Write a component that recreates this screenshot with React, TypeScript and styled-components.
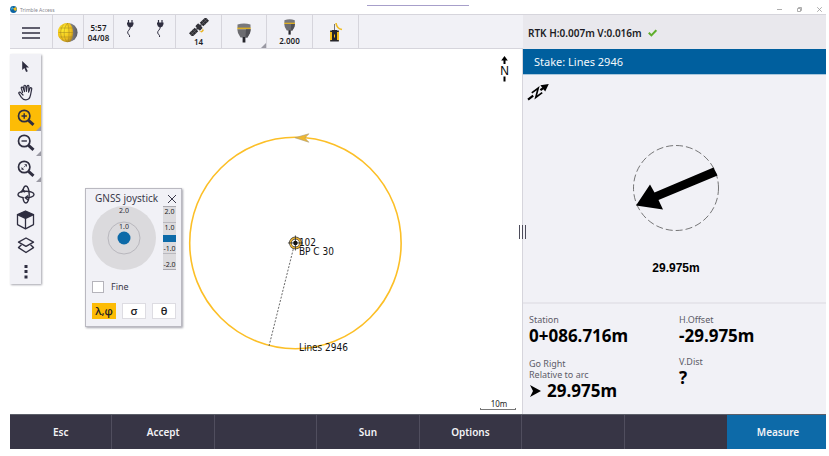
import React, { useState } from "react";
import styled, { createGlobalStyle, css } from "styled-components";

const ink = "#2f2e40";
const panel = "#f1f1f6";
const line = "#d6d5dc";
const amber = "#fdbc06";
const blue = "#0d6aa8";

const Global = createGlobalStyle`
  *, *::before, *::after { box-sizing: border-box; }
  html, body, #root { height: 100%; }
  body { margin: 0; background: #fff; color: #1c1c24; font-family: "Noto Sans", "Open Sans", sans-serif; }
  button { font: inherit; color: inherit; border: 0; padding: 0; margin: 0; background: none; cursor: pointer; }
  svg { display: block; }
`;

const Window = styled.div`
  display: flex;
  flex-direction: column;
  min-height: 100vh;
  padding: 5px 3px 7px 10px;
`;

const TitleBar = styled.header`
  display: grid;
  grid-template-columns: 1fr 102px 1fr;
  height: 9px;
`;
const TitleName = styled.div`
  display: flex;
  align-items: center;
  gap: 3px;
  font-size: 5px;
  line-height: 8px;
  color: #85858c;
`;
const TopAccent = styled.div`
  height: 1px;
  background: #a79fca;
`;
const WindowButtons = styled.div`
  display: flex;
  justify-content: flex-end;
  align-items: center;
  gap: 12px;
  padding-right: 3px;
`;
const WindowButton = styled.button`
  width: 8px;
  height: 8px;
  display: grid;
  place-items: center;
`;

const Main = styled.main`
  flex: 1;
  display: grid;
  grid-template-columns: minmax(0, 513fr) minmax(0, 303fr);
`;
const Left = styled.section`
  position: relative;
  display: flex;
  flex-direction: column;
`;

const cornerMark = css`
  &::after {
    content: "";
    position: absolute;
    right: 0;
    bottom: 0;
    border-style: solid;
    border-width: 0 0 5px 5px;
    border-color: transparent transparent #9a99a3 transparent;
  }
`;
const StatusBar = styled.div`
  display: flex;
  height: 35px;
  background: ${panel};
  border-top: 1px solid ${line};
  border-bottom: 1px solid ${line};
`;
const StatusCell = styled.button<{ $w: number; $corner?: boolean; $plain?: boolean; $raised?: boolean }>`
  position: relative;
  flex: none;
  width: ${(p) => p.$w}px;
  display: flex;
  flex-direction: column;
  align-items: center;
  justify-content: center;
  gap: ${(p) => (p.$corner === undefined ? 0 : 1)}px;
  padding: 2px 0 ${(p) => (p.$raised ? 6 : 0)}px;
  border-right: ${(p) => (p.$plain ? 0 : 1)}px solid ${line};
  font-size: 8px;
  line-height: 10px;
  font-weight: 600;
  ${(p) => p.$corner && cornerMark}
`;

const MapArea = styled.div`
  position: relative;
  flex: 1;
  display: flex;
  align-items: flex-start;
  padding-top: 5px;
  background: #fff;
  border-right: 1px solid ${line};
`;
const MapDrawing = styled.svg`
  position: absolute;
  inset: 0;
  width: 100%;
  height: 100%;
  font-family: "DejaVu Sans Condensed", "DejaVu Sans", sans-serif;
  font-size: 10px;
`;
const ToolStrip = styled.div`
  position: relative;
  display: grid;
  grid-auto-rows: 1fr;
  width: 31px;
  height: 230px;
  background: ${panel};
  box-shadow: 1px 1px 2px #a5a5ad;
`;
const Tool = styled.button<{ $active?: boolean; $corner?: boolean }>`
  position: relative;
  display: grid;
  place-items: center;
  background: ${(p) => (p.$active ? amber : "transparent")};
  ${(p) => p.$corner && cornerMark}
`;

const Joystick = styled.div`
  position: absolute;
  left: 75px;
  top: 139px;
  width: 97px;
  padding: 2px 4px 7px 6px;
  background: ${panel};
  border: 1px solid #bab9c1;
  box-shadow: 1px 1px 2px #a5a5ad;
`;
const JoystickHead = styled.div`
  display: flex;
  justify-content: space-between;
  align-items: center;
  padding-left: 3px;
  font-size: 10px;
  line-height: 15px;
  color: #3a394a;
`;
const JoystickPads = styled.div`
  display: flex;
  gap: 7px;
`;
const PadSvg = styled.svg`
  width: 64px;
  height: 64px;
  font-size: 7px;
`;
const RangeBox = styled.div`
  position: relative;
  width: 13px;
  height: 64px;
  background: #dcdbde;
  border-top: 1px solid #a9a8af;
  border-bottom: 1px solid #a9a8af;
`;
const RangeMarks = styled.div`
  display: grid;
  grid-template-rows: repeat(4, minmax(0, 1fr));
  height: 100%;
  font-size: 7px;
  line-height: 9px;
  text-align: center;
  & > span { border-bottom: 1px solid #b9b8be; }
  & > span:nth-child(2), & > span:last-child { border-bottom: 0; }
  & > span:nth-child(n + 3) { align-content: end; }
`;
const Range = styled.input`
  position: absolute;
  inset: 0;
  width: 13px;
  height: 62px;
  margin: 0;
  writing-mode: vertical-lr;
  direction: rtl;
  appearance: none;
  background: transparent;
  &::-webkit-slider-thumb {
    appearance: none;
    width: 13px;
    height: 7px;
    background: ${blue};
  }
`;
const FineLabel = styled.label`
  display: flex;
  align-items: center;
  gap: 7px;
  margin-top: 10px;
  font-size: 9px;
  line-height: 13px;
  color: #3a394a;
`;
const FineBox = styled.input`
  appearance: none;
  width: 12px;
  height: 12px;
  margin: 0;
  background: #fff;
  border: 1px solid #b5b4bb;
  &:checked { background: ${blue}; }
`;
const ModeRow = styled.div`
  display: flex;
  gap: 6px;
  margin-top: 10px;
`;
const ModeButton = styled.button<{ $active: boolean }>`
  width: 24px;
  height: 16px;
  font-family: "Open Sans", "Noto Sans", sans-serif;
  font-size: 11px;
  line-height: 14px;
  font-weight: 600;
  color: #1c1c24;
  background: ${(p) => (p.$active ? amber : "#fff")};
  border: 1px solid ${(p) => (p.$active ? amber : "#dddce2")};
`;

const North = styled.div`
  position: absolute;
  top: 7px;
  right: 11px;
`;
const Scale = styled.div`
  position: absolute;
  right: 6px;
  bottom: 4px;
  width: 36px;
  font-size: 8px;
  line-height: 9px;
  text-align: center;
  padding-left: 2px;
  color: #222;
  &::after {
    content: "";
    display: block;
    height: 2px;
    margin-left: -2px;
    border: 1px solid #777;
    border-top: 0;
  }
`;
const Splitter = styled.div`
  position: absolute;
  right: -3px;
  top: 211px;
  z-index: 1;
  width: 7px;
  height: 14px;
  display: flex;
  justify-content: space-between;
  & > i { width: 1px; background: #4c4b5a; }
`;

const Right = styled.aside`
  display: flex;
  flex-direction: column;
  background: ${panel};
`;
const RtkBar = styled.div`
  display: flex;
  align-items: center;
  gap: 6px;
  height: 35px;
  padding: 2px 5px 0;
  background: #e9e8ed;
  border-top: 1px solid ${line};
  font-size: 10px;
  font-weight: 600;
`;
const StakeTitle = styled.h1`
  margin: 0;
  height: 26px;
  padding-left: 11px;
  background: #005f9e;
  border-bottom: 1px solid #a9c7dc;
  color: #f4f9fc;
  font-size: 11px;
  line-height: 25px;
  font-weight: 400;
`;
const Compass = styled.div`
  position: relative;
  flex: 1;
  display: flex;
  flex-direction: column;
  align-items: center;
  gap: 28px;
  padding: 69px 0 0 3px;
  font-family: "Liberation Sans", Arial, sans-serif;
  font-size: 12px;
  line-height: 16px;
  font-weight: 700;
  color: #000;
`;
const Heading = styled.svg`
  position: absolute;
  left: 3px;
  top: 5px;
`;
const Readings = styled.dl`
  display: grid;
  grid-template-columns: 1fr 1fr;
  margin: 0;
  height: 112px;
  padding: 10px 6px 0;
  column-gap: 9px;
  border-top: 2px solid #e6e5eb;
`;
const ReadingColumn = styled.div<{ $gap: number }>`
  display: flex;
  flex-direction: column;
  gap: ${(p) => p.$gap}px;
`;
const Reading = styled.div`
  dt { font-size: 9px; line-height: 11px; color: #5d5c68; }
  dd {
    display: flex;
    align-items: center;
    gap: 6px;
    margin: 0;
    font-size: 17px;
    line-height: 21px;
    font-weight: 700;
    color: #000;
  }
`;

const Footer = styled.footer`
  display: grid;
  grid-template-columns: repeat(7, minmax(0, 1fr)) 99px;
  height: 35px;
  background: #373545;
  border-top: 1px solid #5c5f69;
`;
const SoftKey = styled.button<{ $primary?: boolean }>`
  border-right: 1px solid ${(p) => (p.$primary ? blue : "#504e5e")};
  background: ${(p) => (p.$primary ? blue : "transparent")};
  color: #f3f3f6;
  font-size: 10px;
  font-weight: 600;
  padding-left: ${(p) => (p.$primary ? 4 : 0)}px;
  &:nth-last-child(2) { border-right: 0; }
`;

const Plug = () => (
  <svg width="10" height="20" viewBox="0 0 10 20" fill="none">
    <path d="M3.5 0v3M7 0v3" stroke={ink} strokeWidth="1.2" />
    <path d="M2 2.5h6.5v1.5L7.5 6.5 5.2 7.5 3 6.5 2 4z" fill={ink} />
    <path d="M5.2 7c.2 3-3 3.500-2.500 6 .4 1.500 2.500 2 1.800 4" stroke={ink} strokeWidth="1" />
  </svg>
);

const Satellite = () => (
  <svg width="20" height="18" viewBox="0 0 20 18">
    <g transform="rotate(-44 10 9)">
      <rect x="-1.500" y="6.500" width="8" height="5" fill="#2b2b31" />
      <rect x="13.500" y="6.500" width="8" height="5" fill="#2b2b31" />
      <path d="M1 6.500v5M3.800 6.500v5M16.200 6.500v5M19 6.500v5M-1.500 9h8M13.500 9h8" stroke="#77777c" strokeWidth=".5" />
      <rect x="7.800" y="5.800" width="4.400" height="6.400" rx="1" fill="#33333a" />
      <path d="M6.500 9h7" stroke="#33333a" strokeWidth="1.500" />
    </g>
    <path d="M10 13.500c2.200.3 3.800-1.200 3.800-3.400l1 2.600-2 1.900z" fill="#e9b41f" />
  </svg>
);

const Receiver = ({ h }: { h: number }) => (
  <svg width={(h * 14) / 20} height={h} viewBox="0 0 14 20">
    <path d="M.5 1.500Q7-.6 13.500 1.500V5H.5z" fill="#77777b" />
    <rect x=".3" y="4.600" width="13.400" height="1.700" fill="#dcae24" />
    <path d="M.3 6.300h13.400L13 10l-2.500 4.500h-7L1 10z" fill="#6c6c70" />
    <path d="M9 6.300h4.700L13 10l-2.500 4.500h-2z" fill="#505055" />
    <path d="M5.600 14h2.800v5.500H5.600z" fill="#25252b" />
  </svg>
);

const Radio = () => (
  <svg width="14" height="21" viewBox="0 0 14 21" fill="none">
    <path d="M5.500 2v7" stroke="#55555b" strokeWidth=".8" />
    <path d="M7 1c.5 3.800 2.500 6 6 6.500" stroke="#f0bd22" strokeWidth="1.600" />
    <rect x="1" y="9" width="9" height="10" rx="1" fill="#f3bd1c" />
    <path d="M3 8h5v11.500H3zM1.200 8.500h8.600v1.500H1.200zM1.200 18h8.600v1.500H1.200z" fill="#25252b" />
    <path d="M5.500 12.500v3" stroke="#fdbc06" strokeWidth="1" />
  </svg>
);

const Globe = () => (
  <svg width="20" height="21" viewBox="0 0 20 21" fill="none">
    <defs>
      <radialGradient id="globeShade" cx=".4" cy=".35" r=".8">
        <stop offset="0" stopColor="#ffee30" />
        <stop offset=".6" stopColor="#f0c01c" />
        <stop offset="1" stopColor="#94702a" />
      </radialGradient>
      <linearGradient id="globeSide"><stop offset="0" stopColor="#ccc" /><stop offset="1" stopColor="#5c5c60" /></linearGradient>
    </defs>
    <circle cx="10" cy="10.500" r="9.600" fill="url(#globeSide)" />
    <path d="M11.500 1.200C15.500 4.500 16.500 13 12.500 19.600A9.600 9.600 0 1 1 11.500 1.200z" fill="url(#globeShade)" />
    <path d="M10 1C5 5 5 15 9 20M5.500 2.500C1.500 8 2 14 5.500 18.800M9.500 1c2 5 2 14 .5 19M2 6h13M.5 10.500h15M1.500 15h13" stroke="#a08420" strokeWidth=".5" />
  </svg>
);

const Lens = ({ children }: { children: React.ReactNode }) => (
  <svg width="18" height="18" viewBox="0 0 18 18" fill="none" stroke={ink}>
    <circle cx="7.200" cy="7" r="5.700" strokeWidth="1.700" />
    <path d="M11.500 11.300l5 4.500" strokeWidth="3" />
    {children}
  </svg>
);

const tools: { label: string; icon: React.ReactNode; corner?: boolean }[] = [
  {
    label: "Select",
    icon: (
      <svg width="9" height="13" viewBox="0 0 9 13">
        <path d="M1.200 1v9l2.200-2 1.700 4 1.700-.8L5 7.500h3z" fill={ink} />
      </svg>
    ),
  },
  {
    label: "Pan",
    icon: (
      <svg width="16" height="17" viewBox="0 0 16 17" fill="none" stroke={ink} strokeWidth="1.200" strokeLinejoin="round" strokeLinecap="round">
        <path d="M4.600 8.500L3.300 4.400c-.4-1.400 1.300-1.900 1.800-.6L6.500 7.600 5.900 2.500c-.1-1.600 1.700-1.700 1.900-.2l.7 5 .6-4.900c.2-1.500 1.900-1.400 1.800.2l-.3 5.500 1.300-3.600c.6-1.300 2.100-.8 1.800.6l-1.200 6c-.6 3-2 4.700-4.700 4.700-2 0-3.200-.8-4.400-2.500L1 9.700c-.7-1.200.8-2.100 1.700-1.100L5 11" />
      </svg>
    ),
  },
  { label: "Zoom in", corner: true, icon: <Lens><path d="M4.500 7h5.400M7.200 4.300v5.400" strokeWidth="1.400" /></Lens> },
  { label: "Zoom out", corner: true, icon: <Lens><path d="M4.500 7h5.400" strokeWidth="1.400" /></Lens> },
  { label: "Zoom extents", corner: true, icon: <Lens><path d="M4.500 9.700V7L7.200 9.700zM9.900 4.300V7L7.200 4.300z" fill={ink} stroke="none" /><path d="M5.500 8.700l3.400-3.400" strokeWidth=".8" strokeDasharray="1.400 1" /></Lens> },
  {
    label: "Orbit",
    icon: (
      <svg width="18" height="19" viewBox="0 0 18 19" fill="none" stroke={ink} strokeWidth="1.400">
        <path d="M6.500 12.700C3.300 12.300 1 11.100 1 9.500c0-1.900 3.600-3.300 8-3.300s8 1.400 8 3.300-3.600 3.300-8 3.300" />
        <path d="M6 5.500C6.400 3 7.500 1 9 1c1.800 0 3.200 3.800 3.200 8.500S10.800 18 9 18c-1.500 0-2.800-2.500-3.100-6" />
        <path d="M11 10.600L8.300 12.800 11 15M3.800 7.200L6 4.600l2.200 2.600" />
      </svg>
    ),
  },
  {
    label: "Limit box",
    icon: (
      <svg width="19" height="20" viewBox="0 0 19 20" fill="none" stroke={ink} strokeWidth="1.300" strokeLinejoin="round">
        <path d="M9.500 1l8 3.600-8 3.900-8-3.900z" fill={ink} />
        <path d="M1.500 4.600v10l8 4.200 8-4.200v-10M9.500 8.500v10.300" />
      </svg>
    ),
  },
  {
    label: "Layers",
    icon: (
      <svg width="18" height="17" viewBox="0 0 18 17" fill="none" stroke={ink} strokeWidth="1.400" strokeLinejoin="round">
        <path d="M9 1l7.500 4.200L9 9.400 1.500 5.200z" />
        <path d="M4.500 7.800l-3 2.800L9 15.500l7.500-4.900-3-2.800" />
      </svg>
    ),
  },
  {
    label: "More",
    icon: (
      <svg width="4" height="15" viewBox="0 0 4 15" fill={ink}>
        <rect x=".5" y="1" width="3" height="3" /><rect x=".5" y="6" width="3" height="3" /><rect x=".5" y="11.500" width="3" height="3" />
      </svg>
    ),
  },
];

const modes = ["λ,φ", "σ", "θ"];
const softKeys = ["Esc", "Accept", "", "Sun", "Options", "", "", "Measure"];

const JoystickPanel = () => {
  const [mode, setMode] = useState(0);
  return (
    <Joystick role="dialog" aria-label="GNSS joystick">
      <JoystickHead>
        GNSS joystick
        <button aria-label="Close">
          <svg width="10" height="10" viewBox="0 0 10 10" stroke="#3a394a" strokeWidth="1">
            <path d="M1 1l8 8M9 1L1 9" />
          </svg>
        </button>
      </JoystickHead>
      <JoystickPads>
        <PadSvg viewBox="0 0 64 64" textAnchor="middle">
          <circle cx="32" cy="32" r="32" fill="#dbdadd" />
          <circle cx="32" cy="32" r="16" fill="none" stroke="#a9a8af" strokeWidth=".7" />
          <text x="32" y="7" fill="#2c2b38">2.0</text>
          <text x="32" y="23" fill="#2c2b38">1.0</text>
          <circle cx="32" cy="32" r="6.500" fill={blue} />
        </PadSvg>
        <RangeBox>
          <RangeMarks><span>2.0</span><span>1.0</span><span>-1.0</span><span>-2.0</span></RangeMarks>
          <Range type="range" min={-2} max={2} step={0.1} defaultValue={0} aria-label="Height" />
        </RangeBox>
      </JoystickPads>
      <FineLabel><FineBox type="checkbox" />Fine</FineLabel>
      <ModeRow>
        {modes.map((m, i) => (
          <ModeButton key={m} $active={i === mode} onClick={() => setMode(i)}>{m}</ModeButton>
        ))}
      </ModeRow>
    </Joystick>
  );
};

const SiteMap = () => (
  <MapDrawing viewBox="0 0 512 366">
    <circle cx="285.500" cy="194.500" r="106" fill="none" stroke="#fcbf27" strokeWidth="1.600" />
    <path d="M285 89l14-4-4 4.300 4 4.200z" fill="#efb72f" stroke="#a79a78" strokeWidth=".6" />
    <path d="M285 194l-26 104" stroke="#555" strokeWidth=".9" strokeDasharray="2 1.500" />
    <circle cx="285.500" cy="194.500" r="5" fill="#fff" stroke="#4a473e" strokeWidth="2.800" />
    <circle cx="285.500" cy="194.500" r="5" fill="none" stroke="#efb530" strokeWidth="1.500" />
    <path d="M278 194.500h15M285.500 187v15" stroke="#333" strokeWidth=".9" />
    <circle cx="285.500" cy="194.500" r="2.200" fill="#111" />
    <text x="289" y="198" fill="#111">102</text>
    <text x="289" y="207" fill="#111">BP C 30</text>
    <text x="289" y="303" fill="#111">Lines 2946</text>
  </MapDrawing>
);

export default function App() {
  return (
    <>
      <Global />
      <Window>
        <TitleBar>
          <TitleName>
            <svg width="7" height="7" viewBox="0 0 7 7">
              <circle cx="3.500" cy="3.500" r="3.400" fill="#0b63a1" />
              <path d="M3 2.500l3-1.500.8 3L5 5z" fill="#eebb20" />
              <path d="M1 2l2-1v2L1.500 4z" fill="#3fa7d0" />
            </svg>
            Trimble Access
          </TitleName>
          <TopAccent />
          <WindowButtons>
            <WindowButton aria-label="Minimize"><svg width="5" height="5" viewBox="0 0 5 5" stroke="#999"><path d="M0 2.500h5" strokeWidth=".8" /></svg></WindowButton>
            <WindowButton aria-label="Restore"><svg width="5" height="5" viewBox="0 0 5 5" fill="none" stroke="#999" strokeWidth=".8"><path d="M.5 1.500h3v3h-3zM1.500 1.300V.5h3v3h-.8" /></svg></WindowButton>
            <WindowButton aria-label="Close"><svg width="5" height="5" viewBox="0 0 5 5" stroke="#999" strokeWidth=".8"><path d="M.2.2l4.600 4.600M4.800.2L.2 4.800" /></svg></WindowButton>
          </WindowButtons>
        </TitleBar>
        <Main>
          <Left>
            <StatusBar>
              <StatusCell $w={43} aria-label="Menu">
                <svg width="18" height="14" viewBox="0 0 18 14" stroke={ink} strokeWidth="1.500"><path d="M0 2h18M0 7h18M0 12h18" /></svg>
              </StatusCell>
              <StatusCell $w={31} aria-label="Globe"><Globe /></StatusCell>
              <StatusCell $w={30}><span>5:57</span><span>04/08</span></StatusCell>
              <StatusCell $w={31} $plain $raised aria-label="Power 1"><Plug /></StatusCell>
              <StatusCell $w={31} $raised aria-label="Power 2"><Plug /></StatusCell>
              <StatusCell $w={46} $corner={false}><Satellite />14</StatusCell>
              <StatusCell $w={45} $corner aria-label="Receiver"><Receiver h={20} /></StatusCell>
              <StatusCell $w={46} $corner={false}><Receiver h={16} />2.000</StatusCell>
              <StatusCell $w={46} aria-label="Radio"><Radio /></StatusCell>
            </StatusBar>
            <MapArea>
              <SiteMap />
              <ToolStrip>
                {tools.map((t, i) => (
                  <Tool key={t.label} aria-label={t.label} $active={i === 2} $corner={t.corner}>{t.icon}</Tool>
                ))}
              </ToolStrip>
              <JoystickPanel />
              <North>
                <svg width="13" height="26" viewBox="0 0 13 26">
                  <path d="M6.500 0l3.300 4.500H7.500V8h-2V4.500H3.200zM5.500 20.500h2v5h-2z" fill="#000" />
                  <text x="6.500" y="18.500" textAnchor="middle" fontFamily="Liberation Sans" fontSize="12" fill="#000">N</text>
                </svg>
              </North>
              <Scale>10m</Scale>
            </MapArea>
            <Splitter><i /><i /><i /></Splitter>
          </Left>
          <Right>
            <RtkBar>
              RTK H:0.007m V:0.016m
              <svg width="9" height="8" viewBox="0 0 9 8" fill="none" stroke="#5fae2b" strokeWidth="2"><path d="M.8 3.800l2.600 2.600L8.300 1.200" /></svg>
            </RtkBar>
            <StakeTitle>Stake: Lines 2946</StakeTitle>
            <Compass>
              <Heading width="24" height="24" viewBox="0 0 24 24">
                <g transform="rotate(53 12 12)">
                  <path d="M12-1.500l4 7.500H8zM10.900 5h2.200v4h-2.200zM10.900 18h2.200v6.500h-2.200z" fill="#000" />
                  <path d="M9 17.500v-8l6 7.500v-8" fill="none" stroke="#000" strokeWidth="1.700" />
                </g>
              </Heading>
              <svg width="88" height="88" viewBox="0 0 88 88">
                <circle cx="44" cy="44" r="42.500" fill="none" stroke="#555" strokeWidth=".8" strokeDasharray="7 3" />
                <path d="M81.500 23.500l4 8L26.500 56l4.500 9.500L4 61.500l14-21 4.500 8z" fill="#000" />
              </svg>
              29.975m
            </Compass>
            <Readings>
              <ReadingColumn $gap={12}>
                <Reading><dt>Station</dt><dd>0+086.716m</dd></Reading>
                <Reading>
                  <dt>Go Right<br />Relative to arc</dt>
                  <dd><svg width="12" height="12" viewBox="0 0 12 12"><path d="M1 0l11 6L1 12l3-6z" fill="#000" /></svg>29.975m</dd>
                </Reading>
              </ReadingColumn>
              <ReadingColumn $gap={10}>
                <Reading><dt>H.Offset</dt><dd>-29.975m</dd></Reading>
                <Reading><dt>V.Dist</dt><dd>?</dd></Reading>
              </ReadingColumn>
            </Readings>
          </Right>
        </Main>
        <Footer>
          {softKeys.map((k, i) => (
            <SoftKey key={i} $primary={k === "Measure"} aria-label={k || "Unassigned"}>{k}</SoftKey>
          ))}
        </Footer>
      </Window>
    </>
  );
}
